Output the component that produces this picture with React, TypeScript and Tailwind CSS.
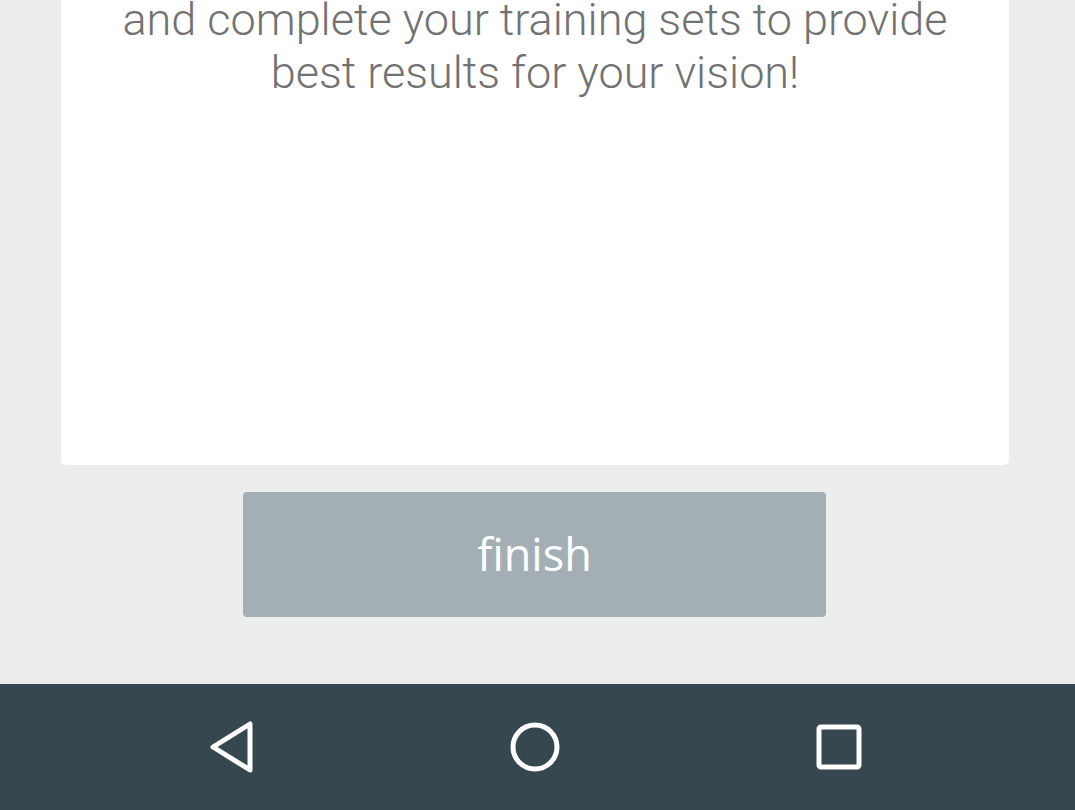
export default function App() {
  return (
    <div className="w-[1075px] h-[810px] bg-[#eceeee] flex flex-col overflow-hidden">
      <div className="mx-[61px] w-[948px] h-[465px] shrink-0 bg-white rounded-b-[5px] overflow-hidden">
        <p
          className="mt-[-7px] text-center text-[45px] leading-[53px] text-[#727272] font-light"
          style={{ fontFamily: "Roboto, 'Liberation Sans', sans-serif" }}
        >
          and complete your training sets to provide
          <br />
          best results for your vision!
        </p>
      </div>
      <div className="mt-[27px] flex">
        <button
          className="ml-[243px] w-[583px] h-[125px] bg-[#a3afb5] rounded-[4px] text-white text-[45px] flex items-center justify-center pb-[2px]"
          style={{ fontFamily: "'Open Sans', 'Noto Sans', sans-serif" }}
        >
          finish
        </button>
      </div>
      <div className="mt-[67px] h-[126px] shrink-0 bg-[#37474f] flex items-center">
        <svg width="48" height="56" viewBox="0 0 48 56" className="ml-[208px] shrink-0">
          <path
            d="M42 5 L42 51 L5 28 Z"
            fill="none"
            stroke="#ffffff"
            strokeWidth="5"
            strokeLinejoin="round"
          />
        </svg>
        <svg width="54" height="54" viewBox="0 0 54 54" className="ml-[252px] shrink-0">
          <circle cx="27" cy="27" r="22" fill="none" stroke="#ffffff" strokeWidth="5" />
        </svg>
        <svg width="46" height="46" viewBox="0 0 46 46" className="ml-[254px] shrink-0">
          <rect x="3" y="3" width="40" height="40" rx="2" fill="none" stroke="#ffffff" strokeWidth="5" />
        </svg>
      </div>
    </div>
  );
}
